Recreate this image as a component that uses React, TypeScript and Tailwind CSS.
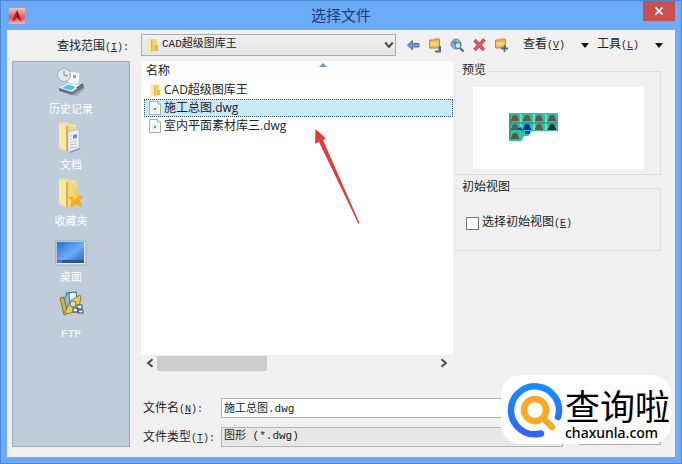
import type { ReactNode } from "react";

const uiFont = "font-['Liberation_Mono','Noto_Sans_CJK_SC',monospace]";
const listFont = "font-['Open_Sans','Noto_Sans_CJK_SC',sans-serif]";

function Hotkey({ children }: { children: string }) {
  return (
    <span className="text-[10px]">
      (<u>{children}</u>)
    </span>
  );
}

function FolderIcon({ className }: { className: string }) {
  return (
    <svg viewBox="0 0 14 16" className={className} aria-hidden="true">
      <path d="M5 2h7v12H5z" fill="#f2d779" />
      <path d="M9 8h4v6H9z" fill="#e3bd51" />
      <path d="M2 1l5 1.500v12.500L2 14z" fill="#fbeaa6" />
      <path d="M6 2.500l1.500.5v12L6 15z" fill="#dcb450" />
    </svg>
  );
}

function DwgIcon() {
  return (
    <svg viewBox="0 0 13 14" className="h-3.5 w-3.5" aria-hidden="true">
      <path d="M1 .5h8.500l2.500 2.500v10.500H1z" fill="#fbfdfb" stroke="#a9b3aa" />
      <path d="M9 .5V3h3" fill="none" stroke="#a9b3aa" />
      <path d="M3 5h7v6H3z" fill="#e9f2e9" />
      <path d="M5.500 7h2v2h-2z" fill="#6f9e6c" />
    </svg>
  );
}

function HistoryIcon() {
  return (
    <svg viewBox="0 0 32 32" className="h-8 w-8" aria-hidden="true">
      <path d="M4 22l9-6 14 3 3 3-8 8-5-1z" fill="#9aa6b0" />
      <path d="M4 22l10-6 12 3-9 7z" fill="#eef2f5" />
      <path d="M4 22v3l13 4 12-8v-2l-12 7z" fill="#66727c" />
      <path d="M7 22l6-3.500 8 2.500-5 3.500z" fill="#57c3ea" />
      <path d="M12 5l13 1.500-1 12L13 17z" fill="#f7f9fa" stroke="#a9b5bf" strokeWidth=".6" />
      <path d="M18 9h3v3h-3z" fill="#7fadd0" />
      <circle cx="9" cy="9" r="6.500" fill="#dfe7e8" stroke="#9caeb5" />
      <path d="M9 4.500V9l4 1" fill="none" stroke="#7d8a92" />
      <path d="M22 22l6-4" stroke="#3e4951" strokeWidth="1.500" />
    </svg>
  );
}

function BigFolder({ children }: { children: ReactNode }) {
  return (
    <svg viewBox="0 0 32 32" className="h-8 w-8" aria-hidden="true">
      <path d="M8 3h13v24H8z" fill="#ecd37c" />
      <path d="M4 1l9 3v26l-9-4z" fill="#fbe7a0" />
      <path d="M11 3.500l2 .5v26l-2-1z" fill="#d8b14c" />
      <path d="M4 1l4-.5L21 3v3l-8-2z" fill="#f8e297" />
      {children}
    </svg>
  );
}

function DocumentsIcon() {
  return (
    <BigFolder>
      <path d="M13 10l11-3v20l-11 3z" fill="#eef1fb" stroke="#a8b3d4" strokeWidth=".7" />
      <path d="M18 13l4-1v4l-4 1z" fill="#6a8ed2" />
      <path d="M15 14h2M15 17h2M15 20l7-1M15 23l7-1M15 26l7-1" stroke="#b7c1da" />
      <path d="M24 26l2 1-10 4-2-1z" fill="#8f9cba" />
    </BigFolder>
  );
}

function FavoritesIcon() {
  return (
    <BigFolder>
      <path d="M13 5l9-1v22l-9 4z" fill="#f1d77f" />
      <path d="M21.500 12l2 6h5l-3.500 4.500 2.500 7-6-3-6.500 3.500 1.500-7-3.500-4 5.500-1z" fill="#f5aa26" />
      <path d="M21.500 13l1.500 6-5 4 1-3-4-2 4-.5z" fill="#ffd15a" />
    </BigFolder>
  );
}

function DesktopIcon() {
  return (
    <svg viewBox="0 0 32 32" className="h-8 w-8" aria-hidden="true">
      <defs>
        <linearGradient id="screen" x1="0" y1="0" x2="1" y2="1">
          <stop offset="0" stopColor="#2b6dcf" />
          <stop offset=".55" stopColor="#69adf7" />
          <stop offset="1" stopColor="#2a64c4" />
        </linearGradient>
      </defs>
      <path d="M1 7h30v24H1z" fill="#e1e7ec" stroke="#8e9aa6" strokeWidth=".8" />
      <path d="M2 8h27v20H2z" fill="url(#screen)" />
      <path d="M2 26h27v3H2z" fill="#31557f" />
      <path d="M2 26h5v3H2z" fill="#3b7fcb" />
    </svg>
  );
}

function FtpIcon() {
  return (
    <svg viewBox="0 0 32 32" className="h-8 w-8" aria-hidden="true">
      <path d="M5 8l4-1 1 3 4-2 3 13-8 4z" fill="#d4b13a" stroke="#615222" strokeWidth=".7" />
      <path d="M11 3l10-1 2 16-10 2z" fill="#f5fbff" stroke="#30637d" />
      <path d="M9 8l5-5 1 12-3 5z" fill="#86b9d8" stroke="#31566b" strokeWidth=".7" />
      <path d="M10 22l6-12 9-5 1 3-3 13-12 3z" fill="#e5ca54" stroke="#6f5e25" strokeWidth=".7" />
      <circle cx="18" cy="14" r="3" fill="#d6dce2" stroke="#6a747b" />
      <path d="M18 18h5v4h-5zM22 15h5v4h-5zM23 20h5v3h-5z" fill="#e9f3f5" stroke="#304653" />
    </svg>
  );
}

function AppIcon() {
  return (
    <svg viewBox="0 0 16 16" className="h-4 w-4" aria-hidden="true">
      <defs>
        <linearGradient id="appbg" x1="0" y1="0" x2="0" y2="1">
          <stop offset="0" stopColor="#f3c4c2" />
          <stop offset=".6" stopColor="#df5655" />
          <stop offset="1" stopColor="#f3b9b6" />
        </linearGradient>
      </defs>
      <path d="M0 0h16v16H0z" fill="url(#appbg)" />
      <path d="M8 2l5 11-3-1-2-3-2 3-3 1z" fill="#b51f26" />
      <path d="M8 2v7l2 3-1-5z" fill="#661117" />
    </svg>
  );
}

function ToolFolder({ children }: { children: ReactNode }) {
  return (
    <svg viewBox="0 0 15 15" className="h-[15px] w-[15px]" aria-hidden="true">
      <path d="M1.500 2h4l1-1h5v9h-10z" fill="#f5b251" stroke="#ca8136" />
      <path d="M2.500 4h8v4h-8z" fill="#ffd186" />
      {children}
    </svg>
  );
}

const tools = [
  {
    name: "后退",
    icon: (
      <svg viewBox="0 0 15 15" className="h-[15px] w-[15px]" aria-hidden="true">
        <path d="M1.500 7l5-4.500v3h6.500v3.500H6.500v3z" fill="#7796d4" stroke="#5b72a8" />
      </svg>
    ),
  },
  {
    name: "上一级",
    icon: (
      <ToolFolder>
        <path d="M7 12.500h3.500V8h2.500v6.500H7z" fill="#576a9e" />
      </ToolFolder>
    ),
  },
  {
    name: "搜索 Web",
    icon: (
      <svg viewBox="0 0 15 15" className="h-[15px] w-[15px]" aria-hidden="true">
        <circle cx="6" cy="6" r="5" fill="#8cb9d8" stroke="#708da8" />
        <path d="M2 5l3-3 2 2-2 3zM7 6l3-1-1 4z" fill="#589c8f" />
        <circle cx="8" cy="7.500" r="3" fill="#cfe4f5" stroke="#416a9d" />
        <path d="M10 10l3.500 3.500" stroke="#3c5c92" strokeWidth="2" />
      </svg>
    ),
  },
  {
    name: "删除",
    icon: (
      <svg viewBox="0 0 15 15" className="h-[15px] w-[15px]" aria-hidden="true">
        <path d="M2.500 2l9.500 10M12.500 1.500L2.500 12" stroke="#b8484c" strokeWidth="3.500" />
        <path d="M3 2.500l9 9M12 2.500l-9 9" stroke="#d9605f" strokeWidth="1.800" />
      </svg>
    ),
  },
  {
    name: "创建新文件夹",
    icon: (
      <ToolFolder>
        <path d="M10.500 7v7M7 10.500h7" stroke="#51699d" strokeWidth="1.800" />
      </ToolFolder>
    ),
  },
];

const places = [
  { name: "历史记录", icon: <HistoryIcon /> },
  { name: "文档", icon: <DocumentsIcon /> },
  { name: "收藏夹", icon: <FavoritesIcon /> },
  { name: "桌面", icon: <DesktopIcon /> },
  { name: "FTP", icon: <FtpIcon /> },
];

const files = [
  { name: "CAD超级图库王", folder: true, selected: false },
  { name: "施工总图.dwg", folder: false, selected: true },
  { name: "室内平面素材库三.dwg", folder: false, selected: false },
];

function MenuButton({ label, hotkey }: { label: string; hotkey: string }) {
  return (
    <button className="flex w-[66px] items-center justify-between">
      <span className="whitespace-nowrap">
        {label}
        <Hotkey>{hotkey}</Hotkey>
      </span>
      <svg viewBox="0 0 8 5" className="h-[5px] w-2" aria-hidden="true">
        <path d="M0 0h8L4 5z" fill="#111" />
      </svg>
    </button>
  );
}

function Chevron({ className }: { className: string }) {
  return (
    <svg viewBox="0 0 8 8" className={className} aria-hidden="true">
      <path d="M1 2l3 3.500L7 2" fill="none" stroke="#4c4c4c" strokeWidth="1.600" />
    </svg>
  );
}

function Preview() {
  const trees = [
    [6, 6, "#8a4a35"], [18, 6, "#6c5848"], [30, 6, "#795044"], [43, 6, "#6b4b58"],
    [6, 15, "#5a5868"], [18, 15, "#172da5"], [30, 15, "#775348"], [43, 15, "#38283a"],
    [6, 24, "#724a43"],
  ] as const;
  return (
    <div className="h-[82px] bg-white pt-[26px] pl-9">
      <svg viewBox="0 0 49 28" className="h-7 w-[49px]" role="img" aria-label="图形预览">
        <path d="M0 0h49v18H23l-4 5h-4l-3 5H0z" fill="#25c5a0" />
        <path d="M25 1v16M37 1v16M12 1v16" stroke="#b9eedf" />
        <path d="M1 1v26M1 10h47" stroke="#268575" />
        {trees.map(([x, y, color]) => (
          <g key={`${x}-${y}`}>
            <circle cx={x} cy={y - 1} r="3" fill={color} />
            <path d={`M${x - 4} ${y}h8v2h-8z`} fill={color} />
          </g>
        ))}
        <path d="M8 16l4-2 2 4zM16 18h5v3h-5z" fill="#1537b2" />
      </svg>
    </div>
  );
}

function Panel({ title, className, children }: { title: string; className: string; children: ReactNode }) {
  return (
    <fieldset className={`border border-[#dcdcdc] border-l-[#ebebeb] ${className}`}>
      <legend className="ml-1 px-0.5 leading-4">{title}</legend>
      {children}
    </fieldset>
  );
}

function Watermark() {
  return (
    <div className="absolute right-2.5 bottom-[19px] flex h-[69px] w-[170px] items-center rounded-[20px] bg-white pl-1.5 text-black">
      <svg viewBox="0 0 56 56" className="h-14 w-14 shrink-0" aria-hidden="true">
        <defs>
          <linearGradient id="ring" x1="0" y1="0" x2="0" y2="1">
            <stop offset="0" stopColor="#168cff" />
            <stop offset="1" stopColor="#3264ff" />
          </linearGradient>
        </defs>
        <path d="M34 51.500A24 24 0 1 1 51 35" fill="none" stroke="url(#ring)" strokeWidth="6.500" strokeLinecap="round" />
        <circle cx="28" cy="28" r="11" fill="none" stroke="#ffa827" strokeWidth="6.500" />
        <path d="M36 36l9 9" stroke="#ffa827" strokeWidth="6.500" strokeLinecap="round" />
      </svg>
      <div className="flex flex-col pt-1.5 pl-0.5">
        <span className="text-[35px] leading-10 whitespace-nowrap font-['Noto_Sans_CJK_SC',sans-serif]">查询啦</span>
        <span className="text-[14px] leading-4 font-medium whitespace-nowrap font-['Noto_Sans',sans-serif]">chaxunla.com</span>
      </div>
    </div>
  );
}

export default function App() {
  return (
    <div className={`relative flex min-h-screen flex-col border border-[#4b87d3] bg-[#6cabf8] px-1.5 pb-1.5 text-[12px] text-[#222] ${uiFont}`}>
      <header className="grid h-[29px] grid-cols-[1fr_auto_1fr] items-center">
        <span className="pl-0.5"><AppIcon /></span>
        <h1 className={`text-[15px] text-[#1d3e70] ${listFont}`}>选择文件</h1>
        <button aria-label="关闭" className="flex h-5 w-8 items-center justify-center self-start justify-self-end bg-[#c75050]">
          <svg viewBox="0 0 8 8" className="h-2 w-2" aria-hidden="true">
            <path d="M.5.5l7 7M7.500.5l-7 7" stroke="#fff" strokeWidth="1.700" />
          </svg>
        </button>
      </header>

      <main className="flex flex-1 flex-col bg-[#f0f0f0] pt-1 pr-3.5 pb-2.5 pl-[5px]">
        <div className="flex items-center">
          <label htmlFor="look-in" className="w-[129px] pt-1 pr-3 text-right">
            查找范围<Hotkey>I</Hotkey><span className="text-[10px]">:</span>
          </label>
          <div className="relative flex-1">
            <FolderIcon className="absolute top-[3px] left-1 h-4 w-3.5" />
            <select id="look-in" className="block h-[22px] w-full appearance-none border border-[#acacac] bg-linear-to-b from-[#f0f0f0]/0 to-[#d9d9d9]/50 pb-px pl-5 text-[11px]">
              <option>CAD超级图库王</option>
            </select>
            <Chevron className="pointer-events-none absolute top-1.5 right-0.5 h-2.5 w-2.5" />
          </div>
          <div className="flex w-[265px] items-center pl-2.5">
            <div className="flex gap-[7px]">
              {tools.map((tool) => (
                <button key={tool.name} aria-label={tool.name}>{tool.icon}</button>
              ))}
            </div>
            <div className="ml-3.5 flex gap-2">
              <MenuButton label="查看" hotkey="V" />
              <MenuButton label="工具" hotkey="L" />
            </div>
          </div>
        </div>

        <div className="mt-[5px] flex flex-1 gap-[11px]">
          <nav className="w-[118px] border border-[#a3a9ae] bg-[#bfcddb] pt-1 text-[11px] text-white">
            {places.map((place) => (
              <button key={place.name} className="flex h-14 w-full flex-col items-center gap-1">
                {place.icon}
                <span className="leading-4">{place.name}</span>
              </button>
            ))}
          </nav>

          <div className="flex flex-1 flex-col">
            <div className="flex flex-1 gap-0.5">
              <div className="flex flex-1 flex-col">
                <div className={`relative flex-1 bg-white ${listFont}`}>
                  <div className="relative h-5 bg-[#fcfcfc] pl-[5px] leading-5">
                    名称
                    <svg viewBox="0 0 8 4" className="absolute top-0.5 left-[178px] h-1 w-2" aria-hidden="true">
                      <path d="M0 4l4-4 4 4z" fill="#6498b8" />
                    </svg>
                  </div>
                  <ul>
                    {files.map((file) => (
                      <li
                        key={file.name}
                        className={`ml-[3px] flex h-[18px] items-center gap-0.5 border pl-[3px] leading-4 ${
                          file.selected ? "border-dotted border-[#27566f] bg-[#cbe8f6]" : "border-transparent"
                        }`}
                      >
                        {file.folder ? <FolderIcon className="h-3.5 w-3.5" /> : <DwgIcon />}
                        {file.name}
                      </li>
                    ))}
                  </ul>
                  <svg viewBox="0 0 46 96" className="absolute top-[68px] left-[173px] h-24 w-[46px]" aria-hidden="true">
                    <path d="M1.500 0l10.500 9.500-3 1.500 36.500 83-1 1L5 13l-4 1.500z" fill="#e03c3b" />
                  </svg>
                </div>
                <div className="flex h-4 items-center pr-1 pl-1">
                  <Chevron className="h-2.5 w-2.5 rotate-90" />
                  <div className="ml-0.5 flex-1">
                    <div className="h-[15px] w-[39%] bg-[#cdcdcd]" />
                  </div>
                  <Chevron className="h-2.5 w-2.5 -rotate-90" />
                </div>
              </div>

              <div className="flex w-[206px] flex-col gap-[5px] pt-0.5">
                <Panel title="预览" className="h-[112px]">
                  <div className="pt-2 pr-4 pl-[17px]"><Preview /></div>
                </Panel>
                <Panel title="初始视图" className="h-[71px]">
                  <label className="mt-[18px] flex items-center gap-[3px] pl-2.5">
                    <input type="checkbox" className="h-[13px] w-[13px] appearance-none border border-[#777] bg-white" />
                    <span>选择初始视图<Hotkey>E</Hotkey></span>
                  </label>
                </Panel>
              </div>
            </div>

            <div className="mt-[26px] flex gap-4">
              <div className="grid flex-1 grid-cols-[80px_1fr] items-center gap-y-2">
                <label htmlFor="file-name" className="pt-1 pl-0.5 leading-4">
                  文件名<Hotkey>N</Hotkey><span className="text-[10px]">:</span>
                </label>
                <input id="file-name" defaultValue="施工总图.dwg" className="h-5 w-full border border-[#b5b5b5] bg-white px-0.5 pb-0.5 text-[11px]" />
                <label htmlFor="file-type" className="pt-1 pl-0.5 leading-4">
                  文件类型<Hotkey>T</Hotkey><span className="text-[10px]">:</span>
                </label>
                <select id="file-type" className="h-5 w-full appearance-none border border-[#b5b5b5] bg-[#e8e8e8] px-0.5 text-[11px]">
                  <option>图形 (*.dwg)</option>
                </select>
              </div>
              <div className="flex w-[82px] flex-col justify-end pb-0.5">
                <button aria-label="取消" className="h-[22px] border border-[#acacac] bg-[#e8e8e8]" />
              </div>
            </div>
          </div>
        </div>
      </main>
      <Watermark />
    </div>
  );
}
